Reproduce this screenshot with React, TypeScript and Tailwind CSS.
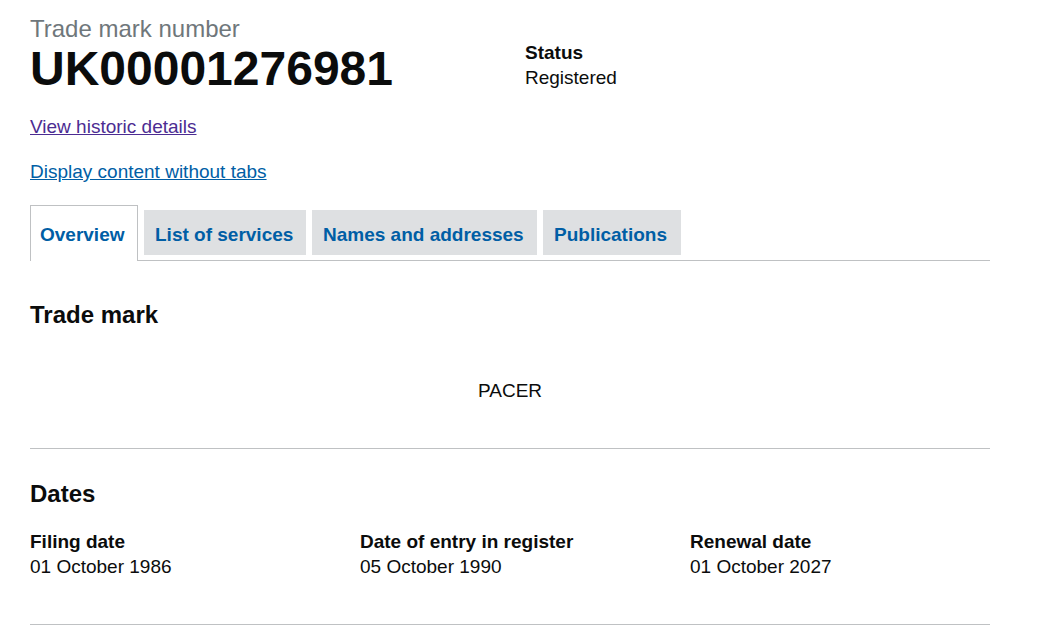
import React from "react";

const tabs = [
  { label: "Overview", width: "w-[108px]" },
  { label: "List of services", width: "w-[162px]" },
  { label: "Names and addresses", width: "w-[225px]" },
  { label: "Publications", width: "w-[138px]" },
];

const dates = [
  { label: "Filing date", value: "01 October 1986" },
  { label: "Date of entry in register", value: "05 October 1990" },
  { label: "Renewal date", value: "01 October 2027" },
];

const App = () => {
  return (
    <div className="min-h-screen bg-white font-['Liberation_Sans',Arial,sans-serif] text-[#0b0c0c]">
      <div className="ml-[30px] w-[960px]">
        <div className="flex">
          <div className="w-[495px]">
            <div className="pt-[16px] text-[24px] leading-[25px] text-[#6f777b]">Trade mark number</div>
            <h1 className="mt-[3px] text-[48px] leading-[50px] font-bold">UK00001276981</h1>
          </div>
          <div className="pt-[40px] text-[19px] leading-[25px]">
            <div className="font-bold">Status</div>
            <div>Registered</div>
          </div>
        </div>

        <div className="mt-[20px] text-[19px] leading-[25px]">
          <a href="#" className="text-[#4c2c92] underline">
            View historic details
          </a>
        </div>
        <div className="mt-[20px] text-[19px] leading-[25px]">
          <a href="#" className="text-[#005ea5] underline">
            Display content without tabs
          </a>
        </div>

        <div className="mt-[21px] flex items-start border-b border-[#bfc1c3]">
          {tabs.map((t, i) =>
            i === 0 ? (
              <div
                key={t.label}
                className={`${t.width} mr-[6px] -mb-px shrink-0 border border-b-0 border-[#bfc1c3] bg-white pt-[16px] pb-[14px] pl-[9px] text-[19px] leading-[25px] font-bold whitespace-nowrap text-[#005ea5]`}
              >
                {t.label}
              </div>
            ) : (
              <div
                key={t.label}
                className={`${t.width} mt-[5px] mr-[6px] shrink-0 bg-[#dee0e2] pt-[12px] pb-[8px] pl-[11px] text-[19px] leading-[25px] font-bold whitespace-nowrap text-[#005ea5]`}
              >
                {t.label}
              </div>
            )
          )}
        </div>

        <section className="pt-[39px]">
          <h2 className="text-[24px] leading-[30px] font-bold">Trade mark</h2>
          <div className="mt-[48px] text-center text-[19px] leading-[25px]">PACER</div>
          <hr className="mt-[45px] border-t border-[#bfc1c3]" />
        </section>

        <section className="pt-[30px]">
          <h2 className="text-[24px] leading-[30px] font-bold">Dates</h2>
          <div className="mt-[20px] grid grid-cols-3 gap-x-[30px] text-[19px] leading-[25px]">
            {dates.map((d) => (
              <div key={d.label}>
                <div className="font-bold">{d.label}</div>
                <div>{d.value}</div>
              </div>
            ))}
          </div>
          <hr className="mt-[45px] border-t border-[#bfc1c3]" />
        </section>
      </div>
    </div>
  );
};

export default App;
